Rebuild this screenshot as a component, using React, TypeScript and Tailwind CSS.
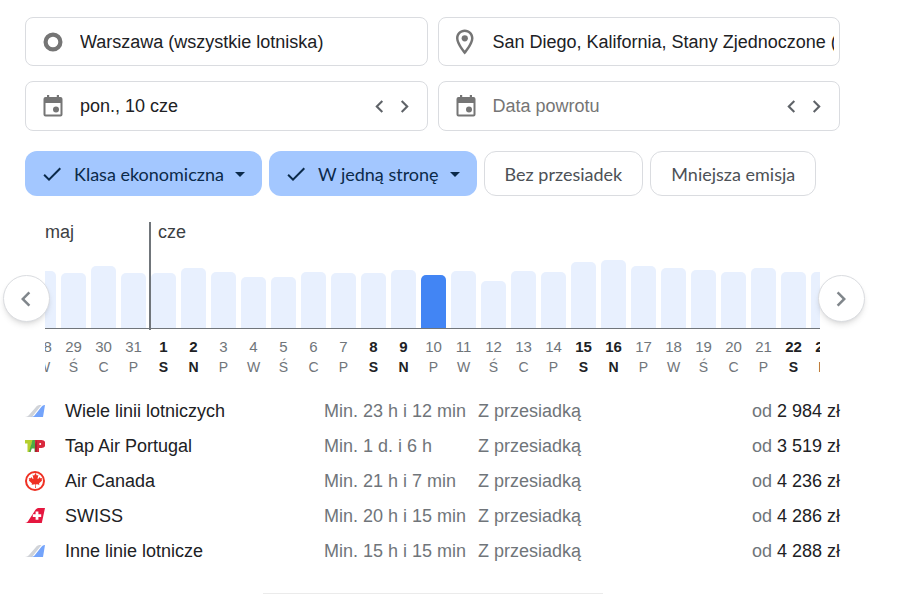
import type { ReactNode } from "react";
import { FaCanadianMapleLeaf } from "react-icons/fa";

interface Day {
  date: number;
  weekday: string;
  height: number;
}

interface Month {
  name: string;
  days: Day[];
}

interface Airline {
  name: string;
  logo: ReactNode;
  duration: string;
  price: string;
}

const SELECTED_DATE = 10;

const toDays = (first: number, weekdays: string[], heights: number[]): Day[] =>
  heights.map((height, i) => ({
    date: first + i,
    weekday: weekdays[i % weekdays.length],
    height,
  }));

const months: Month[] = [
  {
    name: "maj",
    days: toDays(28, ["W", "Ś", "C", "P"], [57, 55, 62, 55]),
  },
  {
    name: "cze",
    days: toDays(
      1,
      ["S", "N", "P", "W", "Ś", "C", "P"],
      [
        55, 60, 56, 51, 51, 56, 55, 55, 58, 53, 57, 47, 57, 56, 66, 68, 62, 60,
        58, 56, 60, 56, 56,
      ],
    ),
  },
];

const Chevron = ({ dir, className }: { dir: "left" | "right"; className: string }) => (
  <svg viewBox="0 0 24 24" fill="currentColor" className={className}>
    {dir === "left" ? (
      <path d="M15.41 7.41 14 6l-6 6 6 6 1.41-1.41L10.83 12z" />
    ) : (
      <path d="M10 6 8.59 7.41 13.17 12l-4.58 4.59L10 18l6-6z" />
    )}
  </svg>
);

const CalendarIcon = () => (
  <svg viewBox="0 0 24 24" fill="currentColor" className="size-6">
    <path d="M19.5 3H18V1h-2.2v2H8.2V1H6v2H4.5A2 2 0 0 0 2.5 5v15.5a2 2 0 0 0 2 2h15a2 2 0 0 0 2-2V5a2 2 0 0 0-2-2zm0 17.5h-15V9h15z" />
    <circle cx="15" cy="15.5" r="3" />
  </svg>
);

const OriginIcon = () => (
  <svg viewBox="0 0 24 24" fill="none" stroke="currentColor" className="size-6">
    <circle cx="12" cy="12" r="7.4" strokeWidth="4.2" />
  </svg>
);

const PinIcon = () => (
  <svg viewBox="0 0 24 24" fill="currentColor" className="size-[30px]">
    <path d="M11 2C7.130 2 4 5.130 4 9c0 5.250 7 13 7 13s7-7.750 7-13c0-3.870-3.130-7-7-7zM6 9c0-2.760 2.240-5 5-5s5 2.240 5 5c0 2.880-2.880 7.190-5 9.880C8.920 16.210 6 11.850 6 9z" />
    <circle cx="11" cy="9" r="2.500" />
  </svg>
);

const TailLogo = () => (
  <svg viewBox="0 0 20 12" className="h-3 w-5">
    <path d="M0 12c1.500 0 2.800-.6 3.800-1.700L11 2C12.200.6 13.500 0 15.500 0h1L7 12z" fill="#d0d3d8" />
    <path d="M6 12c1.500 0 2.800-.6 3.800-1.700L15.500 3C17 1 18 0 20 0l-2 12z" fill="#74a4fb" />
  </svg>
);

const TapLogo = () => (
  <svg viewBox="0 0 20 12" className="h-3 w-5">
    <path d="M0 0h10v3.500H6.500L5.500 12H2.500V3.500H0z" fill="#b5cf2e" />
    <path d="M7.500 0H11v12H9.500V8.500H6.800L5.500 12H4z" fill="#4fae46" />
    <path d="M10 0h6.500a3.800 3.800 0 0 1 0 8H14v4h-4z" fill="#d9293d" />
    <path d="M10 4.500 12 0v12h-2z" fill="#a8242f" />
    <circle cx="15.200" cy="3.900" r="1" fill="#fff" />
  </svg>
);

const AirCanadaLogo = () => (
  <span className="flex size-5 items-center justify-center rounded-full border-2 border-[#ef3124] text-[#ef3124]">
    <FaCanadianMapleLeaf className="size-[15px]" />
  </span>
);

const SwissLogo = () => (
  <svg viewBox="0 0 20 15" className="h-[15px] w-5">
    <path d="M0 15c1.500-.3 2.300-.8 3-1.800L10.500 1.800C11.400.5 12.500 0 14 0h6l-3.200 15z" fill="#e5173f" />
    <path d="M10.600 3.500h2.800v2.700h2.800V9h-2.800v2.700h-2.800V9H7.800V6.200h2.800z" fill="#fff" />
  </svg>
);

const airlines: Airline[] = [
  { name: "Wiele linii lotniczych", logo: <TailLogo />, duration: "Min. 23 h i 12 min", price: "2 984 zł" },
  { name: "Tap Air Portugal", logo: <TapLogo />, duration: "Min. 1 d. i 6 h", price: "3 519 zł" },
  { name: "Air Canada", logo: <AirCanadaLogo />, duration: "Min. 21 h i 7 min", price: "4 236 zł" },
  { name: "SWISS", logo: <SwissLogo />, duration: "Min. 20 h i 15 min", price: "4 286 zł" },
  { name: "Inne linie lotnicze", logo: <TailLogo />, duration: "Min. 15 h i 15 min", price: "4 288 zł" },
];

interface FieldProps {
  label: string;
  icon: ReactNode;
  value?: string;
  placeholder?: string;
  stepper?: boolean;
}

const Field = ({ label, icon, value, placeholder, stepper }: FieldProps) => (
  <div
    className={`flex items-center rounded-lg border border-[#dadce0] pl-3 ${
      stepper ? "h-[50px] pr-[10px]" : "h-[49px] pr-[5px]"
    }`}
  >
    <label className="flex min-w-0 flex-1 items-center gap-3 text-[#757575]">
      <span className="flex w-[30px] shrink-0 justify-center">{icon}</span>
      <input
        type="text"
        aria-label={label}
        defaultValue={value}
        placeholder={placeholder}
        className="w-full min-w-0 text-lg leading-6 text-[#202124] outline-none placeholder:text-[#757575]"
      />
    </label>
    {stepper && (
      <div className="flex text-[#5f6368]">
        <button type="button" aria-label="Poprzedni dzień">
          <Chevron dir="left" className="size-[25px]" />
        </button>
        <button type="button" aria-label="Następny dzień">
          <Chevron dir="right" className="size-[25px]" />
        </button>
      </div>
    )}
  </div>
);

const ActiveChip = ({ children }: { children: ReactNode }) => (
  <button
    type="button"
    className="flex h-[45px] items-center rounded-xl bg-[#a3c7ff] pr-[10px] pl-[15px] text-[#0b2a4a]"
  >
    <svg viewBox="0 0 24 24" fill="currentColor" className="mr-[10px] size-6">
      <path d="M9 16.170 4.830 12l-1.420 1.410L9 19 21 7l-1.410-1.410z" />
    </svg>
    {children}
    <svg viewBox="0 0 24 24" fill="currentColor" className="ml-1 size-6">
      <path d="m7 10 5 5 5-5z" />
    </svg>
  </button>
);

const Chip = ({ children }: { children: ReactNode }) => (
  <button type="button" className="h-[45px] rounded-xl border border-[#dadce0] px-5 text-[#4d5156]">
    {children}
  </button>
);

const DayColumn = ({ day }: { day: Day }) => {
  const selected = day.date === SELECTED_DATE;
  const weekend = day.weekday === "S" || day.weekday === "N";

  return (
    <button type="button" className="flex w-[30px] shrink-0 flex-col">
      <span className="flex h-[82px] w-full items-end border-b border-[#70757a]">
        <span
          className={`w-[25px] rounded-t-[5px] ${selected ? "bg-[#4285f4]" : "bg-[#e8f0fe]"}`}
          style={{ height: day.height }}
        />
      </span>
      <span
        className={`mt-2 flex w-[25px] flex-col items-center ${
          weekend ? "font-bold text-[#202124]" : "text-[#70757a]"
        }`}
      >
        <span className="text-[15px] leading-5">{day.date}</span>
        <span className="text-sm leading-5">{day.weekday}</span>
      </span>
    </button>
  );
};

const PriceChart = () => (
  <div className="relative mt-[26px]">
    <div className="mx-5 flex overflow-hidden">
      {months.map((month, i) => (
        <section key={month.name} className={i === 0 ? "-ml-[14px] shrink-0" : "relative shrink-0"}>
          {i > 0 && <span className="absolute top-0 -left-0.5 h-[108px] w-0.5 bg-[#70757a]" />}
          <h3 className={`h-[25px] text-lg leading-5 text-[#3c4043] ${i === 0 ? "pl-[14px]" : "pl-[7px]"}`}>
            {month.name}
          </h3>
          <div className="flex">
            {month.days.map((day) => (
              <DayColumn key={day.date} day={day} />
            ))}
          </div>
        </section>
      ))}
    </div>
    <button
      type="button"
      aria-label="Wcześniejsze daty"
      className="absolute top-[53px] -left-[22px] flex size-[47px] items-center justify-center rounded-full border border-[#dadce0] bg-white pr-0.5 text-[#80868b] shadow-md"
    >
      <Chevron dir="left" className="size-[30px]" />
    </button>
    <button
      type="button"
      aria-label="Późniejsze daty"
      className="absolute top-[53px] -right-[25px] flex size-[47px] items-center justify-center rounded-full border border-[#dadce0] bg-white pr-0.5 text-[#80868b] shadow-md"
    >
      <Chevron dir="right" className="size-[30px]" />
    </button>
  </div>
);

const App = () => {
  return (
    <main className="bg-white pt-[17px] pr-[69px] pl-[25px] font-['Liberation_Sans',Arial,sans-serif] text-[#202124]">
      <form className="grid grid-cols-2 gap-x-[10px] gap-y-[15px]">
        <Field label="Skąd" icon={<OriginIcon />} value="Warszawa (wszystkie lotniska)" />
        <Field label="Dokąd" icon={<PinIcon />} value="San Diego, Kalifornia, Stany Zjednoczone (SAN)" />
        <Field label="Data wylotu" icon={<CalendarIcon />} value="pon., 10 cze" stepper />
        <Field label="Data powrotu" icon={<CalendarIcon />} placeholder="Data powrotu" stepper />
      </form>

      <div className="mt-5 flex gap-[7px] font-[Lato,sans-serif] text-lg whitespace-nowrap">
        <ActiveChip>Klasa ekonomiczna</ActiveChip>
        <ActiveChip>W jedną stronę</ActiveChip>
        <Chip>Bez przesiadek</Chip>
        <Chip>Mniejsza emisja</Chip>
      </div>

      <PriceChart />

      <table className="mt-4 w-full text-lg leading-5 whitespace-nowrap">
        <tbody>
          {airlines.map((airline) => (
            <tr key={airline.name} className="h-[35px] text-[#70757a]">
              <td className="w-10">{airline.logo}</td>
              <td className="text-[#202124]">{airline.name}</td>
              <td className="w-[154px]">{airline.duration}</td>
              <td className="w-[154px]">Z przesiadką</td>
              <td className="w-[208px] text-right">
                od <span className="text-[#202124]">{airline.price}</span>
              </td>
            </tr>
          ))}
        </tbody>
      </table>

      <div className="mx-auto mt-[25px] h-px w-[340px] bg-[#ebebeb]" />
    </main>
  );
};

export default App;
